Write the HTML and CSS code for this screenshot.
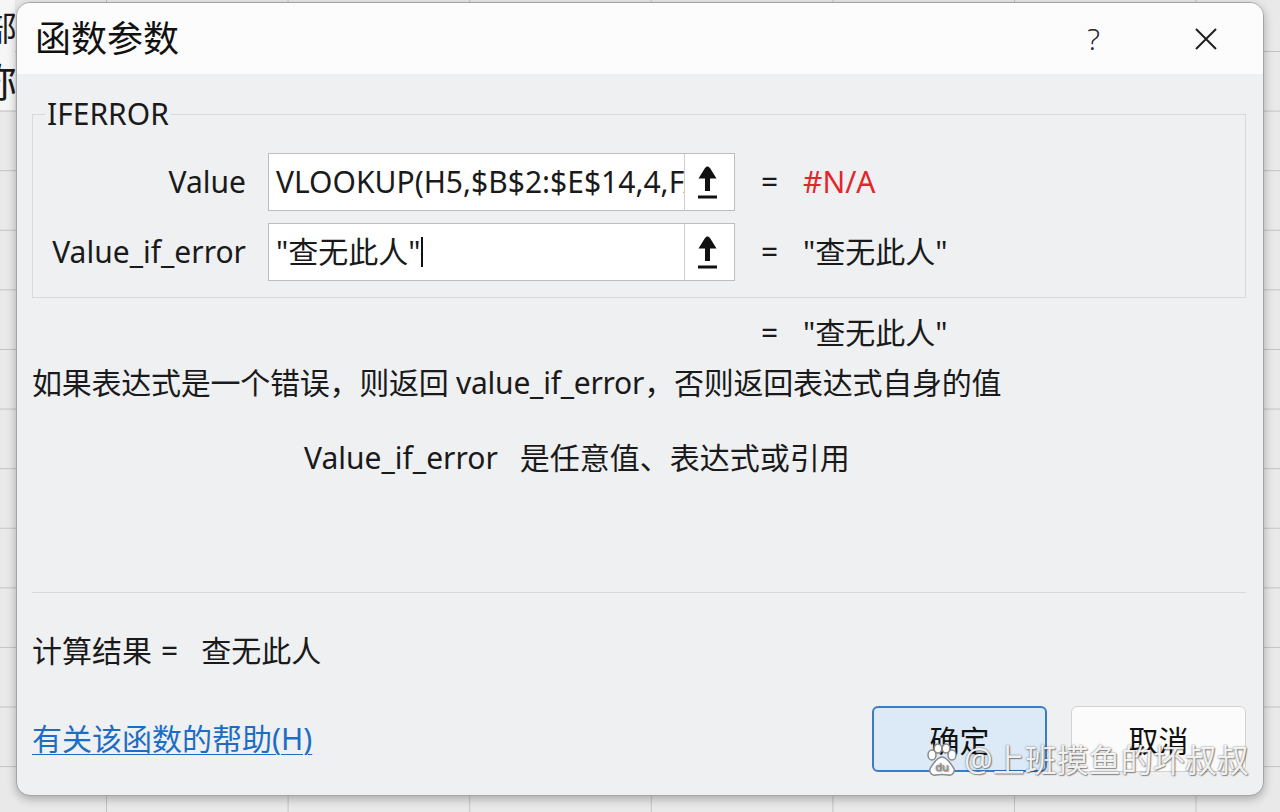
FILE: index.html
```html
<!DOCTYPE html>
<html lang="zh-CN">
  <head>
    <meta charset="UTF-8" />
    <meta name="viewport" content="width=device-width, initial-scale=1.0" />
    <title>函数参数</title>
    <link rel="stylesheet" href="styles.css">
  </head>
  <body>
    <div class="sheet-col">
      <span class="cell-text top">部</span>
      <span class="cell-text second">称</span>
    </div>

    <div class="dialog">
      <div class="titlebar">
        <div class="title">函数参数</div>
        <span class="help">?</span>
        <svg class="close" width="22" height="22" viewBox="0 0 22 22">
          <path d="M1 1 L21 21 M21 1 L1 21" stroke="#202020" stroke-width="2" fill="none" />
        </svg>
      </div>

      <div class="dialog-body">
        <fieldset class="args">
          <legend>IFERROR</legend>

          <div class="arg-row">
            <label class="arg-label">Value</label>
            <div class="ref-input">
              <div class="ref-text">VLOOKUP(H5,$B$2:$E$14,4,FALSE)</div>
              <div class="ref-btn">
                <svg width="21" height="33" viewBox="0 0 21 33">
                  <path d="M10.5 0.5 C9.5 0.5 8.8 1.2 8 2 L1.5 12.5 H8 V25 H13 V12.5 H19.5 L13 2 C12.2 1.2 11.5 0.5 10.5 0.5 Z" fill="#111" />
                  <rect x="1" y="29.5" width="19" height="3" fill="#111" />
                </svg>
              </div>
            </div>
            <span class="eq">=</span>
            <span class="val error">#N/A</span>
          </div>

          <div class="arg-row">
            <label class="arg-label">Value_if_error</label>
            <div class="ref-input">
              <div class="ref-text">"查无此人"<span class="caret"></span></div>
              <div class="ref-btn">
                <svg width="21" height="33" viewBox="0 0 21 33">
                  <path d="M10.5 0.5 C9.5 0.5 8.8 1.2 8 2 L1.5 12.5 H8 V25 H13 V12.5 H19.5 L13 2 C12.2 1.2 11.5 0.5 10.5 0.5 Z" fill="#111" />
                  <rect x="1" y="29.5" width="19" height="3" fill="#111" />
                </svg>
              </div>
            </div>
            <span class="eq">=</span>
            <span class="val">"查无此人"</span>
          </div>
        </fieldset>

        <div class="total-row">
          <span class="eq">=</span>
          <span class="val">"查无此人"</span>
        </div>

        <p class="desc">如果表达式是一个错误，则返回 value_if_error，否则返回表达式自身的值</p>

        <p class="arg-desc">
          <span class="arg-name">Value_if_error</span>
          <span>是任意值、表达式或引用</span>
        </p>

        <div class="sep"></div>

        <div class="result">
          <span>计算结果</span>
          <span class="result-eq">=</span>
          <span class="result-val">查无此人</span>
        </div>

        <div class="footer">
          <a class="help-link" href="#">有关该函数的帮助(H)</a>
          <div class="buttons">
            <button class="btn primary">确定</button>
            <button class="btn">取消</button>
          </div>
        </div>
      </div>
    </div>

    <div class="watermark">
      <svg width="34" height="34" viewBox="0 0 34 34">
        <g fill="#fff" stroke="#8a8a8a" stroke-width="1.5">
          <ellipse cx="7" cy="12" rx="4" ry="5" />
          <ellipse cx="13" cy="5.5" rx="3.8" ry="4.5" />
          <ellipse cx="21" cy="5.5" rx="3.8" ry="4.5" />
          <ellipse cx="27" cy="12" rx="4" ry="5" />
          <path d="M17 14 C12 14 9 20 6 24 C3 28 6 33 11 32 C14 31.5 20 31.5 23 32 C28 33 31 28 28 24 C25 20 22 14 17 14 Z" />
        </g>
        <text x="17" y="28" text-anchor="middle" class="paw-text">du</text>
      </svg>
      <span>@上班摸鱼的坏叔叔</span>
    </div>
  </body>
</html>
```

FILE: styles.css
```css
body {
  margin: 0;
  width: 1280px;
  height: 812px;
  overflow: hidden;
  position: relative;
  font-family: "Noto Sans", "Noto Sans CJK SC", sans-serif;
  color: #1a1a1a;
  background-color: #e9e9e9;
  background-image:
    linear-gradient(to bottom, #c3c3c3 1px, transparent 1px),
    linear-gradient(to right, #c3c3c3 1px, transparent 1px);
  background-size: 100% 59.6px, 181.6px 100%;
  background-position: 0 51px, 106px 0;
}

.sheet-col {
  position: absolute;
  top: 0;
  left: 0;
  width: 15px;
  height: 110px;
  overflow: hidden;
  display: flex;
  flex-direction: column;
  align-items: flex-end;
  background: #f6f6f6;
}

.cell-text {
  font-size: 34px;
  line-height: 40px;
  white-space: nowrap;
  margin-right: -2px;
}

.cell-text.top {
  margin-top: 8px;
}

.cell-text.second {
  margin-top: 14px;
  font-size: 40px;
}

.dialog {
  position: absolute;
  left: 16px;
  top: 2px;
  width: 1248px;
  height: 794px;
  box-sizing: border-box;
  border: 1px solid #a4a4a4;
  border-radius: 14px;
  background: #eff0f2;
  box-shadow: 0 3px 10px rgba(0, 0, 0, 0.28);
  overflow: hidden;
  display: flex;
  flex-direction: column;
}

.titlebar {
  height: 71px;
  flex: none;
  background: #fcfcfc;
  display: flex;
  align-items: center;
  padding-left: 18px;
  padding-right: 46px;
}

.title {
  font-size: 36px;
  line-height: 40px;
  color: #111;
}

.help {
  margin-left: auto;
  font-size: 30px;
  line-height: 40px;
  color: #2a2a2a;
  font-weight: 300;
}

.close {
  margin-left: 95px;
}

.dialog-body {
  flex: 1;
  padding: 0 17px 0 15px;
  display: flex;
  flex-direction: column;
  font-size: 30px;
  line-height: 40px;
}

.args {
  margin: 20px 0 0 0;
  padding: 19px 0 16px 0;
  border: 1px solid #d8d9db;
  min-inline-size: 0;
}

.args legend {
  margin-left: 12px;
  padding: 0 2px;
  font-size: 30px;
  line-height: 40px;
}

.arg-row {
  display: flex;
  align-items: center;
  height: 58px;
}

.arg-row + .arg-row {
  margin-top: 12px;
}

.arg-label {
  width: 213px;
  text-align: right;
  flex: none;
}

.ref-input {
  margin-left: 22px;
  width: 467px;
  height: 58px;
  box-sizing: border-box;
  border: 1px solid #bdbdbd;
  background: #fff;
  display: flex;
  flex: none;
}

.ref-text {
  flex: 1;
  overflow: hidden;
  white-space: nowrap;
  padding-left: 7px;
  display: flex;
  align-items: center;
}

.caret {
  display: inline-block;
  width: 2px;
  height: 30px;
  background: #111;
  margin-left: 1px;
}

.ref-btn {
  width: 50px;
  flex: none;
  border-left: 1px solid #cfcfcf;
  display: flex;
  align-items: center;
  justify-content: center;
  padding-right: 4px;
  box-sizing: border-box;
}

.eq {
  margin-left: 26px;
  width: 17px;
  text-align: center;
}

.val {
  margin-left: 25px;
  white-space: nowrap;
}

.val.error {
  color: #e3262b;
}

.total-row {
  display: flex;
  margin-top: 15px;
  padding-left: 703px;
}

.desc {
  margin: 10px 0 0 0;
  white-space: nowrap;
  letter-spacing: -0.25px;
}

.arg-desc {
  margin: 35px 0 0 0;
  padding-left: 272px;
  display: flex;
  gap: 22px;
}

.sep {
  margin-top: 114px;
  height: 1px;
  background: #d8d9db;
}

.result {
  margin-top: 38px;
  display: flex;
}

.result-eq {
  margin-left: 9px;
}

.result-val {
  margin-left: 23px;
}

.footer {
  margin-top: 35px;
  display: flex;
  align-items: center;
}

.help-link {
  color: #1c6ec4;
  text-decoration: underline;
  text-underline-offset: 4px;
  text-decoration-thickness: 1px;
}

.buttons {
  margin-left: auto;
  display: flex;
  gap: 24px;
}

.btn {
  width: 175px;
  height: 66px;
  font-family: inherit;
  font-size: 30px;
  color: #111;
  border-radius: 6px;
  border: 1px solid #d2d2d2;
  background: #fbfbfb;
  padding: 0;
}

.btn.primary {
  background: #dce9f7;
  border: 2px solid #3b7dc4;
}

.watermark {
  position: absolute;
  left: 925px;
  top: 740px;
  display: flex;
  align-items: center;
  gap: 5px;
  font-size: 32px;
  line-height: 40px;
  color: rgba(255, 255, 255, 0.92);
  text-shadow: 0 0 2px rgba(0, 0, 0, 0.55), 1px 1px 1px rgba(0, 0, 0, 0.35);
  white-space: nowrap;
}

.paw-text {
  font-size: 11px;
  font-family: "Noto Sans", sans-serif;
  fill: #8a8a8a;
}
```
